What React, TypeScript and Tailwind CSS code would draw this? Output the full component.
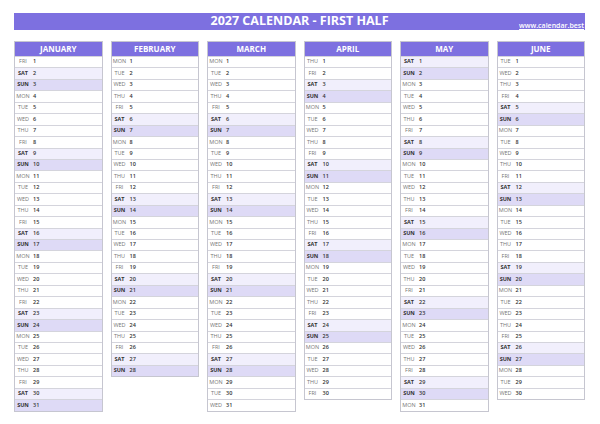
import React from 'react'

const DAYS = ['SUN', 'MON', 'TUE', 'WED', 'THU', 'FRI', 'SAT']

const months = [
  { name: 'JANUARY', start: 5, len: 31 },
  { name: 'FEBRUARY', start: 1, len: 28 },
  { name: 'MARCH', start: 1, len: 31 },
  { name: 'APRIL', start: 4, len: 30 },
  { name: 'MAY', start: 6, len: 31 },
  { name: 'JUNE', start: 2, len: 30 },
]

function Month({ name, start, len }: { name: string; start: number; len: number }) {
  const rows = Array.from({ length: len }, (_, i) => i + 1)
  return (
    <div className="border border-[#c6c6d0] self-start">
      <div className="h-[14px] bg-[#7d70e0] text-white text-[8px] font-bold flex items-center justify-center">
        {name}
      </div>
      {rows.map((d) => {
        const wd = (start + d - 1) % 7
        const bg = wd === 0 ? 'bg-[#dedaf6]' : wd === 6 ? 'bg-[#f1effc]' : 'bg-white'
        const weekend = wd === 0 || wd === 6
        return (
          <div
            key={d}
            className={`h-[11.45px] border-t border-[#d4d4dc] flex items-center text-[5.5px] leading-none ${bg}`}
          >
            <span
              className={`w-[16px] text-center ${weekend ? 'font-bold text-[#333]' : 'text-[#777]'}`}
            >
              {DAYS[wd]}
            </span>
            <span className="ml-[2px] font-semibold text-[#333]">{d}</span>
          </div>
        )
      })}
    </div>
  )
}

export default function App() {
  return (
    <div
      className="w-[600px] h-[424px] bg-white pl-[14px] pr-[15px] pt-[13px]"
      style={{ fontFamily: '"Open Sans", "Liberation Sans", sans-serif' }}
    >
      <div className="h-[17px] bg-[#7d70e0] relative flex items-center justify-center">
        <h1 className="text-white text-[12.5px] font-bold leading-none">2027 CALENDAR - FIRST HALF</h1>
        <span className="absolute right-[1px] bottom-[1px] text-white text-[7px] font-semibold underline leading-none">
          www.calendar.best
        </span>
      </div>
      <div className="grid grid-cols-6 gap-x-[8px] mt-[11px]">
        {months.map((m) => (
          <Month key={m.name} {...m} />
        ))}
      </div>
    </div>
  )
}
